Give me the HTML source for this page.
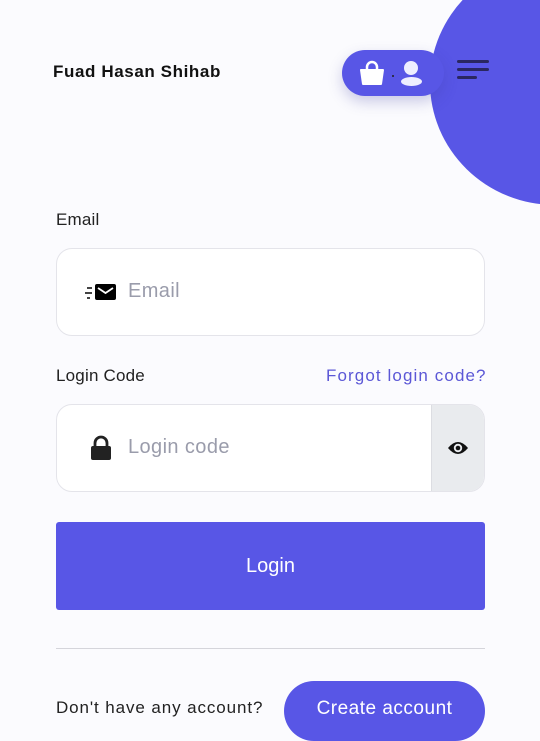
<!DOCTYPE html>
<html><head><style>
*{margin:0;padding:0;box-sizing:border-box}
body{width:540px;height:720px;overflow:hidden;background:#fbfbfe;font-family:"Liberation Sans",sans-serif;position:relative}
.circle{position:absolute;left:430px;top:-40px;width:250px;height:245px;border-radius:50%;background:#5856e6}
.name{position:absolute;left:53px;top:62px;font-size:17px;font-weight:bold;color:#111;letter-spacing:0.6px}
.pill{position:absolute;left:342px;top:50px;width:102px;height:46px;border-radius:23px;background:#5856e6;box-shadow:0 6px 14px rgba(60,60,160,.25)}
.ham{position:absolute;left:457px;height:3px;background:#2a2760;border-radius:2px}
.label{position:absolute;font-size:17px;color:#222;letter-spacing:0.2px}
.input{position:absolute;left:56px;width:429px;height:88px;border:1px solid #e4e4ea;border-radius:16px;background:#fff;overflow:hidden}
.ph{position:absolute;left:71px;top:31px;font-size:20px;color:#9a9cab;letter-spacing:0.4px}
.btn{position:absolute;left:56px;top:522px;width:429px;height:88px;background:#5856e6;border-radius:3px;color:#fff;font-size:20px;text-align:center;line-height:88px}
</style></head><body>
<div class="circle"></div>
<div class="name">Fuad Hasan Shihab</div>
<div class="pill">
<svg style="position:absolute;left:17px;top:10px" width="26" height="26" viewBox="0 0 26 26"><path d="M8 10V7a5 5 0 0 1 10 0v3" stroke="#fff" stroke-width="2.5" fill="none"/><path d="M2 10h22l-2 14H4z" fill="#fff" stroke="#fff" stroke-linejoin="round" stroke-width="2"/></svg>
<div style="position:absolute;left:50px;top:25px;width:2px;height:2px;background:#222;border-radius:50%"></div>
<div style="position:absolute;left:62px;top:11px;width:14px;height:14px;border-radius:50%;background:#eef"></div>
<div style="position:absolute;left:59px;top:27px;width:21px;height:9px;border-radius:50%;background:#eef"></div>
</div>
<div class="ham" style="top:60px;width:32px"></div>
<div class="ham" style="top:68px;width:32px"></div>
<div class="ham" style="top:76px;width:20px"></div>
<div class="label" style="left:56px;top:210px">Email</div>
<div class="input" style="top:248px">
<svg style="position:absolute;left:28px;top:34px" width="32" height="20" viewBox="0 0 32 20"><rect x="2" y="4" width="5" height="2" fill="#444"/><rect x="0" y="9" width="7" height="2" fill="#444"/><rect x="2" y="14" width="3" height="2" fill="#444"/><rect x="10" y="1" width="21" height="16" rx="2" fill="#000"/><path d="M13 5l7.5 5 7.5-5" stroke="#fff" stroke-width="1.8" fill="none"/></svg>
<div class="ph">Email</div></div>
<div class="label" style="left:56px;top:366px">Login Code</div>
<div class="label" style="left:326px;top:366px;color:#5b57d6;letter-spacing:1.1px">Forgot login code?</div>
<div class="input" style="top:404px">
<svg style="position:absolute;left:33px;top:30px" width="22" height="26" viewBox="0 0 22 26"><path d="M5 12V8a6 6 0 0 1 12 0v4" stroke="#222" stroke-width="2.8" fill="none"/><rect x="1" y="11" width="20" height="14" rx="2" fill="#222"/></svg>
<div class="ph">Login code</div>
<div style="position:absolute;right:0;top:0;width:53px;height:88px;background:#e9ebee;border-left:1px solid #dcdde2">
<svg style="position:absolute;left:15px;top:35px" width="22" height="16" viewBox="0 0 22 16"><path d="M1 8Q11-4 21 8Q11 20 1 8z" fill="#111"/><circle cx="11" cy="8" r="4.2" fill="#e9ebee"/><circle cx="11" cy="8" r="2.3" fill="#111"/></svg>
</div></div>
<div class="btn">Login</div>
<div style="position:absolute;left:56px;top:648px;width:429px;height:1px;background:#d5d5db"></div>
<div class="label" style="left:56px;top:698px;letter-spacing:0.9px">Don't have any account?</div>
<div style="position:absolute;left:284px;top:681px;width:201px;height:60px;border-radius:30px;background:#5856e6;color:#fff;font-size:19px;letter-spacing:0.5px;text-align:center;padding-top:17px">Create account</div>
</body></html>
